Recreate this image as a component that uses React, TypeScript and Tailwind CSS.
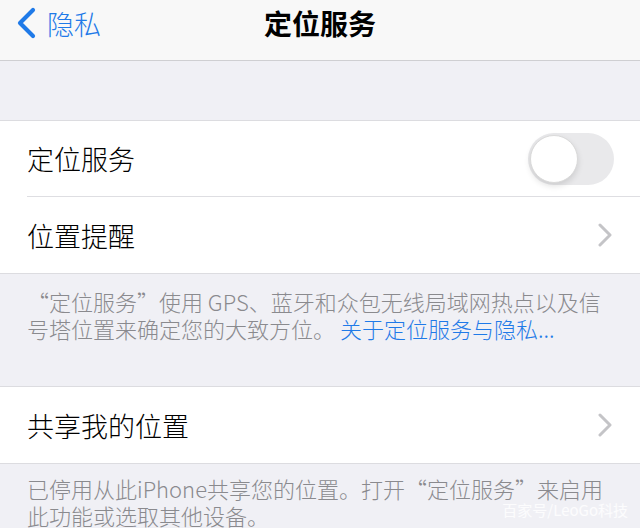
import React from 'react'

const FONT = "font-['Noto_Sans_CJK_SC','Noto_Sans',sans-serif]"

function Chevron() {
      return (
            <svg width="14" height="24" viewBox="0 0 14 24" fill="none">
                  <path
                        d="M2 2 L12 12 L2 22"
                        stroke="#c4c4c7"
                        strokeWidth="3"
                        strokeLinecap="round"
                        strokeLinejoin="round"
                  />
            </svg>
      )
}

function Toggle() {
      return (
            <div className="relative w-[86px] h-[52px] rounded-full bg-[#e9e9eb]">
                  <div className="absolute left-[2px] top-[2px] w-[48px] h-[48px] rounded-full bg-white border border-[#dadada] shadow-[0_3px_6px_rgba(0,0,0,0.12)]" />
            </div>
      )
}

function Row({
      label,
      right,
      divider,
}: {
      label: string
      right: React.ReactNode
      divider?: boolean
}) {
      return (
            <div className="h-[76px] pl-[27px] flex">
                  <div
                        className={
                              'flex-1 flex items-center justify-between ' +
                              (divider ? 'border-b border-[#dedee2]' : '')
                        }
                  >
                        <span className="text-[27px] leading-none font-light text-black">
                              {label}
                        </span>
                        {right}
                  </div>
            </div>
      )
}

export default function App() {
      return (
            <div className={`relative w-[640px] h-[528px] overflow-hidden bg-[#f0f0f5] ${FONT}`}>
                  {/* Nav bar */}
                  <div className="h-[61px] bg-[#f8f8f8] border-b border-[#cfcfd2] grid grid-cols-[1fr_auto_1fr] items-start pt-[8px]">
                        <div className="flex items-center gap-[10px] pl-[15px] h-[30px]">
                              <svg width="22" height="32" viewBox="0 0 22 32" fill="none">
                                    <path
                                          d="M18 3 L5 16 L18 29"
                                          stroke="#1f7ae8"
                                          strokeWidth="4.2"
                                          strokeLinecap="round"
                                          strokeLinejoin="round"
                                    />
                              </svg>
                              <span className="text-[27px] leading-none font-light text-[#1f7ae8]">
                                    隐私
                              </span>
                        </div>
                        <div className="h-[30px] flex items-center text-[28px] leading-none font-semibold text-black">
                              定位服务
                        </div>
                        <div />
                  </div>

                  <div className="h-[59px]" />

                  {/* Group 1 */}
                  <div className="bg-white border-y border-[#dcdce0]">
                        <Row
                              label="定位服务"
                              divider
                              right={
                                    <div className="pr-[26px]">
                                          <Toggle />
                                    </div>
                              }
                        />
                        <Row
                              label="位置提醒"
                              right={
                                    <div className="pr-[28px]">
                                          <Chevron />
                                    </div>
                              }
                        />
                  </div>

                  <div className="h-[112px] px-[27px] pt-[14px] text-[22px] leading-[27px] font-light text-[#8a8a8e]">
                        “定位服务”使用 GPS、蓝牙和众包无线局域网热点以及信号塔位置来确定您的大致方位。
                        <span className="text-[#1f7ae8]"> 关于定位服务与隐私...</span>
                  </div>

                  {/* Group 2 */}
                  <div className="bg-white border-y border-[#dcdce0]">
                        <Row
                              label="共享我的位置"
                              right={
                                    <div className="pr-[28px]">
                                          <Chevron />
                                    </div>
                              }
                        />
                  </div>

                  <div className="px-[27px] pt-[11px] text-[22px] leading-[27px] font-light text-[#8a8a8e]">
                        已停用从此iPhone共享您的位置。打开“定位服务”来启用此功能或选取其他设备。
                  </div>

                  <div className="absolute right-[12px] top-[502px] text-[15px] leading-none text-white/80">
                        百家号/LeoGo科技
                  </div>
            </div>
      )
}
